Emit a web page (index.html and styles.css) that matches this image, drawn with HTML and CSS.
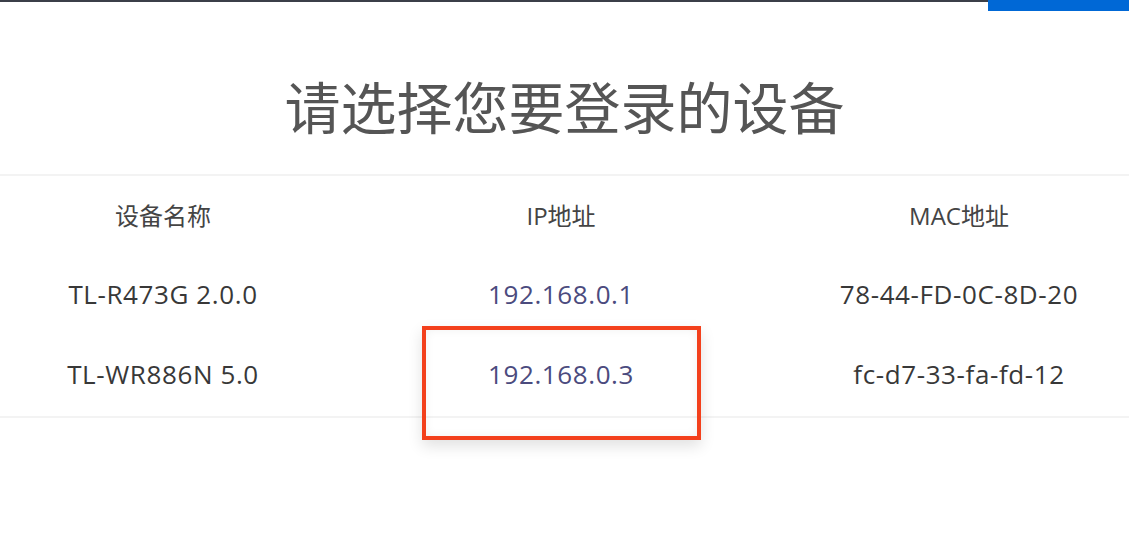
FILE: index.html
```html
<!DOCTYPE html>
<html lang="zh-CN">
<head>
    <meta charset="UTF-8">
    <meta name="viewport" content="width=device-width, initial-scale=1.0">
    <title>选择设备</title>
    <link rel="stylesheet" href="styles.css">
</head>
<body>
<div class="page">

    <div class="topbar">
        <div class="line"></div>
        <div class="tab"></div>
    </div>

    <h1 class="title">请选择您要登录的设备</h1>

    <div class="devices">
        <div class="row head">
            <div class="cell">设备名称</div>
            <div class="cell">IP地址</div>
            <div class="cell">MAC地址</div>
        </div>
        <div class="row">
            <div class="cell">TL-R473G 2.0.0</div>
            <div class="cell"><a href="#">192.168.0.1</a></div>
            <div class="cell">78-44-FD-0C-8D-20</div>
        </div>
        <div class="row">
            <div class="cell">TL-WR886N 5.0</div>
            <div class="cell"><a href="#">192.168.0.3</a><span class="mark"></span></div>
            <div class="cell">fc-d7-33-fa-fd-12</div>
        </div>
    </div>

</div>
</body>
</html>
```

FILE: styles.css
```css
*{
    margin: 0px;
    padding: 0px;
    box-sizing: border-box;
}
body{
    background: #ffffff;
    font-family: "Open Sans", "Noto Sans CJK SC", sans-serif;
    color: #383838;
}
.page{
    height: 100vh;
    overflow: hidden;
}
.topbar{
    display: flex;
    align-items: flex-start;
    height: 11px;
}
.topbar>.line{
    flex: 1;
    height: 2px;
    background: #3b3f48;
}
.topbar>.tab{
    width: 141px;
    height: 11px;
    background: #0068d6;
}
.title{
    margin-top: 60px;
    font: normal 56px "Noto Sans CJK SC", sans-serif;
    color: #555555;
    text-align: center;
    line-height: 68px;
    height: 103px;
}
.devices{
    width: 1194px;
    margin-left: -36px;
    border-top: 2px solid #f3f3f3;
    border-bottom: 2px solid #f3f3f3;
}
.row{
    display: grid;
    grid-template-columns: 1fr 1fr 1fr;
    height: 80px;
}
.cell{
    display: flex;
    align-items: center;
    justify-content: center;
    padding-bottom: 4px;
    font-size: 26px;
    letter-spacing: 0.6px;
    position: relative;
}
.head .cell{
    font-size: 24px;
    letter-spacing: 0px;
    color: #444444;
}
.cell>a{
    color: #4b4b7e;
    text-decoration: none;
}
.mark{
    position: absolute;
    left: 60px;
    top: -10px;
    width: 279px;
    height: 114px;
    border: 4px solid #f3401c;
    box-shadow: 0 6px 14px rgba(0, 0, 0, 0.12), inset 0 0 10px rgba(0, 0, 0, 0.06);
}
```
